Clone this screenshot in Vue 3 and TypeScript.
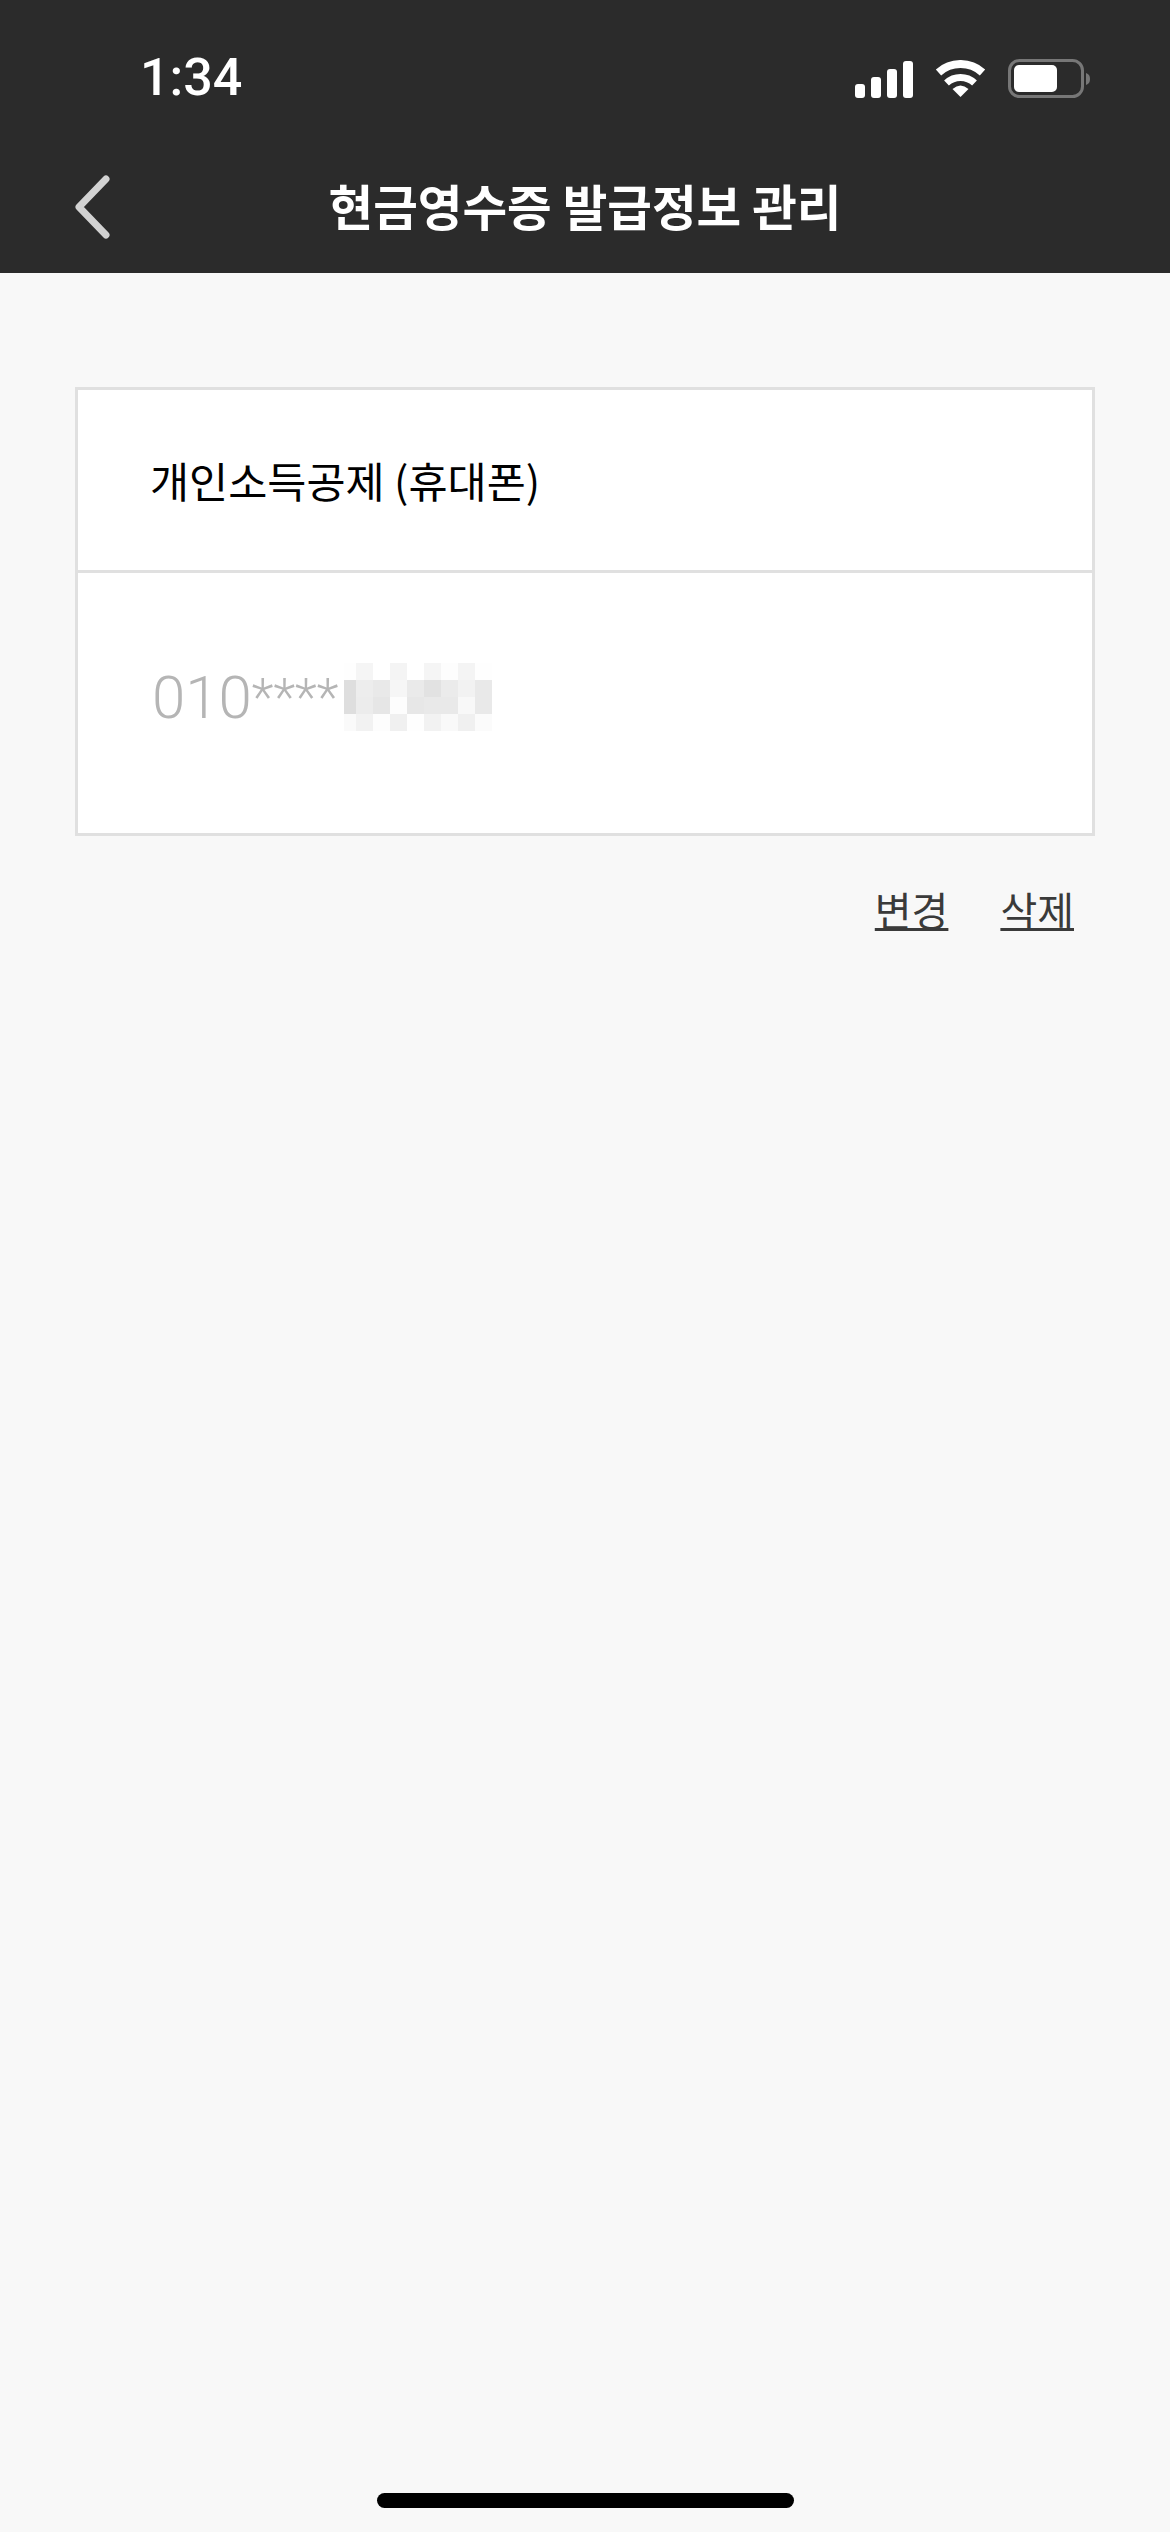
<script setup lang="ts">
// 가려진 번호 영역의 모자이크 셀 색상
const mosaic = [
  ['#fefefe', '#f5f5f5', '#ffffff', '#f4f4f4', '#ffffff', '#f5f5f5', '#fdfdfd', '#f4f4f4', '#fefefe'],
  ['#dedede', '#ededed', '#e9e9e9', '#f6f6f6', '#eaeaea', '#e2e2e2', '#ebebeb', '#f2f2f2', '#e9e9e9'],
  ['#dedede', '#ececec', '#e6e6e6', '#fdfdfd', '#e7e7e7', '#e9e9e9', '#e9e9e9', '#f8f8f8', '#e9e9e9'],
  ['#fafafa', '#f2f2f2', '#fdfdfd', '#f0f0f0', '#fefefe', '#f2f2f2', '#f9f9f9', '#f0f0f0', '#fbfbfb'],
]
const cells = mosaic.flat()
const bars = [14, 21, 29, 37]
</script>

<template>
  <div class="page">
    <header class="top">
      <div class="status">
        <span class="time">1:34</span>
        <div class="status-icons">
          <div class="signal">
            <i v-for="h in bars" :key="h" :style="{ height: h + 'px' }"></i>
          </div>
          <svg class="wifi" width="52" height="38" viewBox="0 0 52 38">
            <path d="M3.5 12.4A33 33 0 0 1 47.5 12.4" fill="none" stroke="#fff" stroke-width="8" />
            <path d="M11.5 23A20.5 20.5 0 0 1 39.5 23" fill="none" stroke="#fff" stroke-width="7" />
            <path d="M25.5 37L17.5 29Q25.5 22 33.5 29Z" fill="#fff" />
          </svg>
          <svg class="battery" width="83" height="40" viewBox="0 0 83 40">
            <rect x="1.5" y="1.5" width="73" height="36" rx="10" fill="none" stroke="#777" stroke-width="3" />
            <rect x="6" y="6" width="43" height="27" rx="5" fill="#fff" />
            <path d="M78 14C81 15 82 17 82 20C82 23 81 25 78 26Z" fill="#777" />
          </svg>
        </div>
      </div>
      <nav class="nav">
        <svg class="back" width="38" height="64" viewBox="0 0 38 64">
          <path d="M31 4L4 32L31 60" fill="none" stroke="#d2d2d2" stroke-width="7" stroke-linecap="round" stroke-linejoin="round" />
        </svg>
        <h1>현금영수증 발급정보 관리</h1>
      </nav>
    </header>

    <main class="content">
      <section class="card">
        <div class="card-title">개인소득공제 (휴대폰)</div>
        <div class="card-value">
          <span>010</span>
          <span class="stars">****</span>
          <div class="mosaic">
            <i v-for="(c, idx) in cells" :key="idx" :style="{ background: c }"></i>
          </div>
        </div>
      </section>
      <div class="actions">
        <a>변경</a>
        <a>삭제</a>
      </div>
    </main>

    <footer class="home">
      <div class="home-bar"></div>
    </footer>
  </div>
</template>

<style>
html,
body {
  margin: 0;
  background: #f8f8f8;
}
</style>

<style scoped>
.page {
  display: flex;
  flex-direction: column;
  width: 1170px;
  height: 2532px;
  background: #f8f8f8;
  font-family: 'Noto Sans CJK KR', 'Noto Sans', sans-serif;
}

.top {
  height: 273px;
  background: #2b2b2b;
  color: #fff;
}

.status {
  display: flex;
  justify-content: space-between;
  align-items: center;
  height: 58px;
  padding: 49px 79px 0 140px;
}

.time {
  font-family: Roboto, sans-serif;
  font-size: 52px;
  font-weight: 500;
  line-height: 58px;
}

.status-icons {
  display: flex;
  align-items: flex-end;
}

.signal {
  display: flex;
  align-items: flex-end;
  gap: 6px;
  height: 37px;
  margin-right: 22px;
}

.signal i {
  width: 10px;
  border-radius: 3px;
  background: #fff;
}

.wifi {
  margin-right: 21px;
}

.battery {
  margin-bottom: -1px;
}

.nav {
  position: relative;
  display: flex;
  justify-content: center;
  align-items: center;
  height: 96px;
  margin-top: 50px;
}

.back {
  position: absolute;
  left: 75px;
  top: 18px;
}

.nav h1 {
  margin: 0;
  font-size: 48.5px;
  font-weight: 700;
  line-height: 64px;
}

.content {
  flex: 1;
  padding: 114px 75px 0;
}

.card {
  border: 3px solid #e0e0e0;
  background: #fff;
}

.card-title {
  height: 180px;
  padding-left: 72px;
  border-bottom: 3px solid #e0e0e0;
  font-size: 42.5px;
  line-height: 180px;
  color: #000;
}

.card-value {
  display: flex;
  align-items: center;
  box-sizing: border-box;
  height: 260px;
  padding: 0 0 12px 74px;
  font-family: Roboto, sans-serif;
  font-size: 60px;
  font-weight: 300;
  color: #b5b5b5;
}

.stars {
  font-size: 51px;
}

.mosaic {
  display: grid;
  grid-template-columns: 12px repeat(8, 17px);
  grid-auto-rows: 17px;
  margin-left: 6px;
}

.actions {
  display: flex;
  justify-content: flex-end;
  gap: 52px;
  margin-top: 43px;
  padding-right: 21px;
  font-size: 40px;
  line-height: 60px;
  color: #3a3a3a;
}

.actions a {
  text-decoration: underline;
  text-decoration-thickness: 3px;
}

.home {
  display: flex;
  justify-content: center;
  height: 39px;
}

.home-bar {
  width: 417px;
  height: 15px;
  border-radius: 8px;
  background: #000;
}
</style>
